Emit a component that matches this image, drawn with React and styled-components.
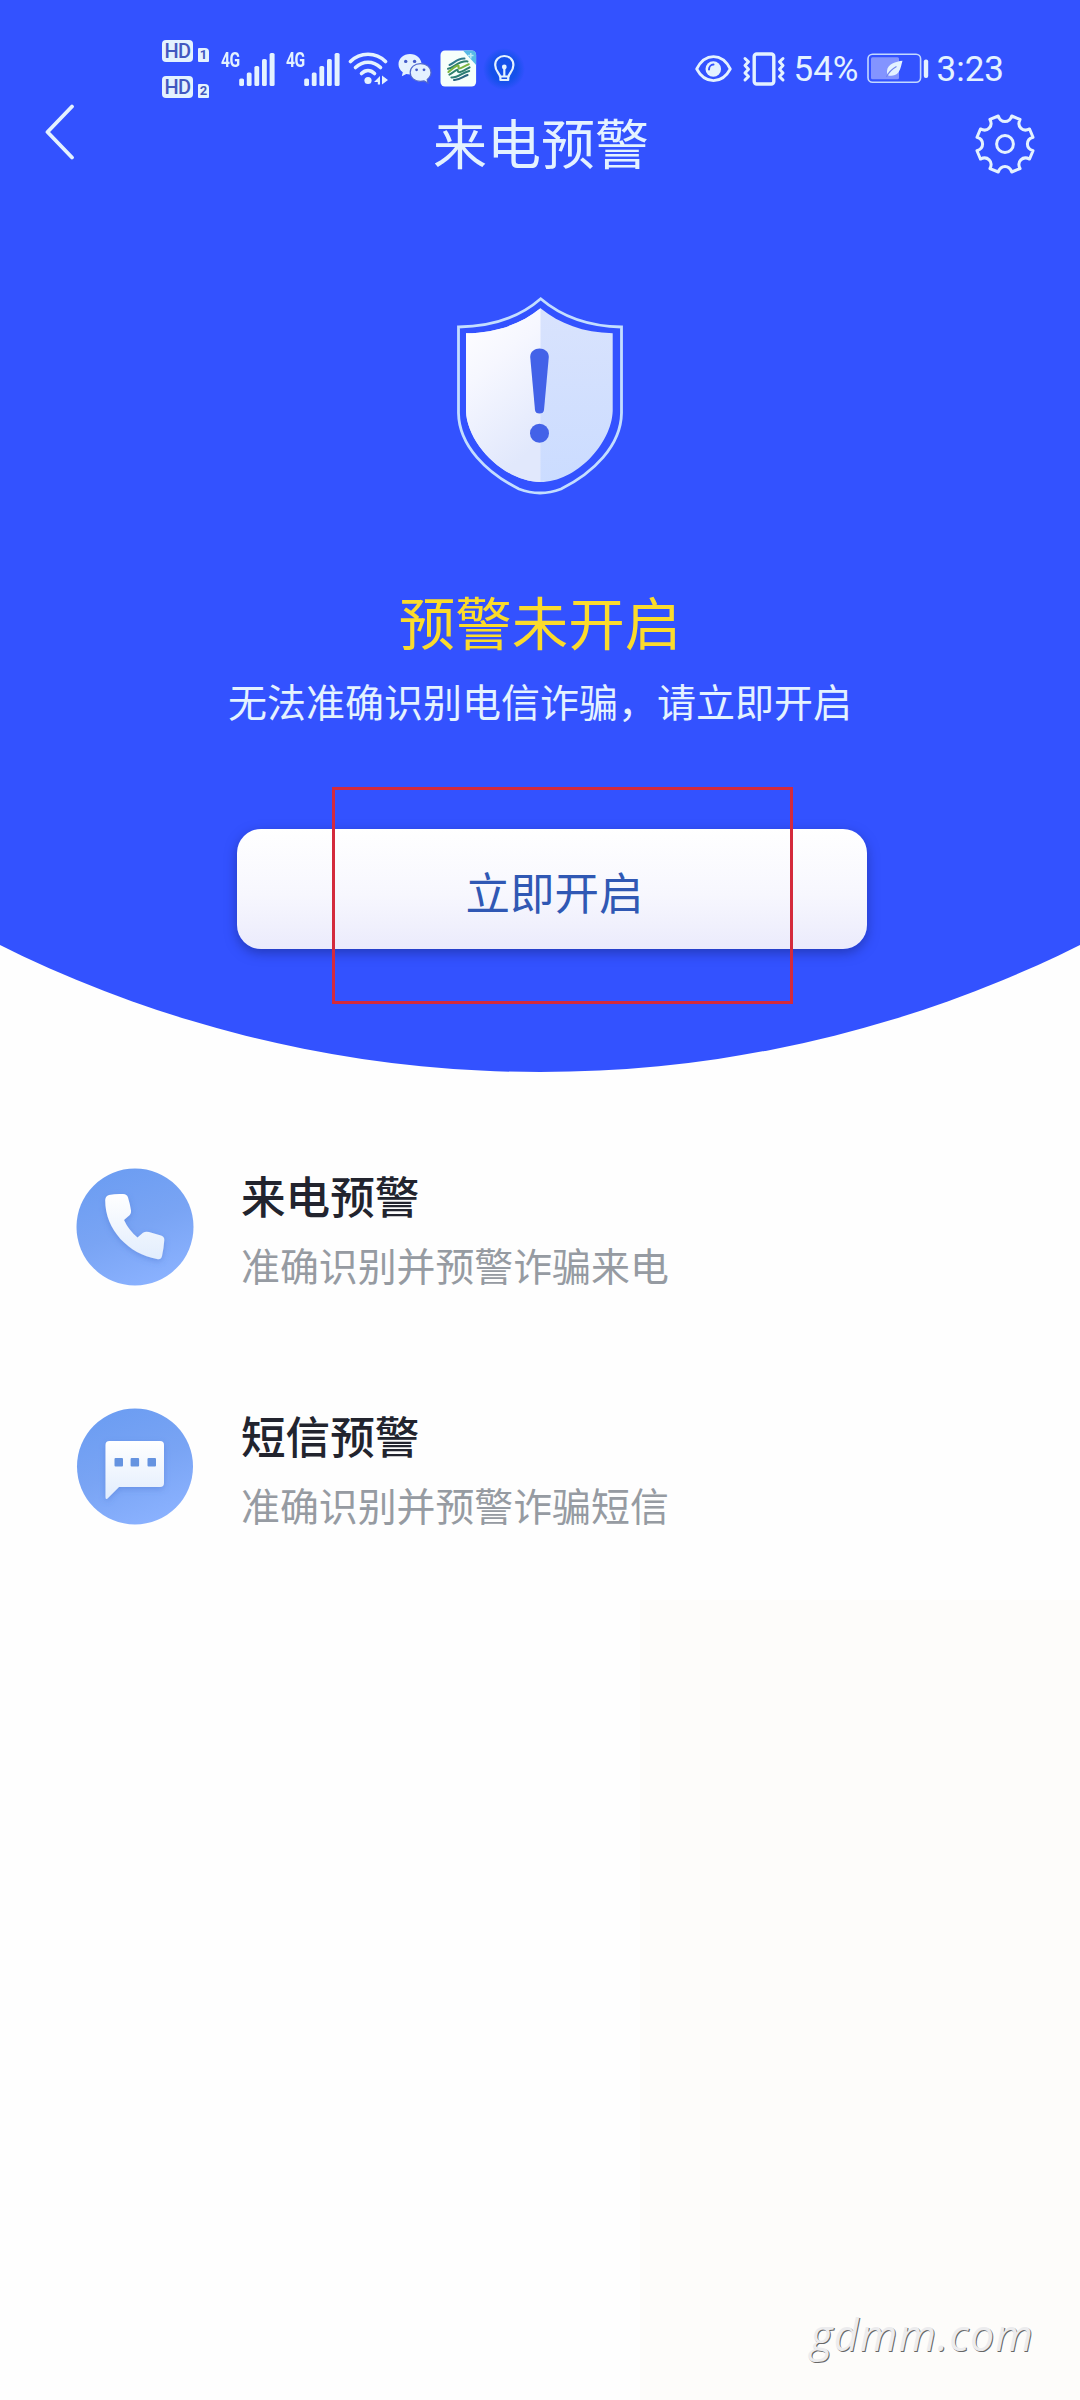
import styled, { createGlobalStyle } from 'styled-components';

const COLORS = {
  blue: '#3352ff',
  yellow: '#fbdb2c',
  ice: '#e4f2ff',
  ink: '#22242e',
  gray: '#969ba2',
  red: '#d42a3c',
};

const FEATURES = [
  { id: 'call', title: '来电预警', text: '准确识别并预警诈骗来电' },
  { id: 'sms', title: '短信预警', text: '准确识别并预警诈骗短信' },
];

const App = () => (
  <>
    <GlobalStyle />
    <Page>
      <Hero>
        <StatusBar />
        <NavBar>
          <BackButton aria-label="返回">
            <svg width="30" height="56" viewBox="0 0 30 56" fill="none">
              <path d="M27 2.5 L2.5 28 L27 53.5" stroke={COLORS.ice} strokeWidth="3.8" strokeLinecap="round" strokeLinejoin="round" />
            </svg>
          </BackButton>
          <Title>来电预警</Title>
          <SettingsButton aria-label="设置">
            <GearIcon />
          </SettingsButton>
        </NavBar>
        <ShieldIcon />
        <State>预警未开启</State>
        <Hint>无法准确识别电信诈骗，请立即开启</Hint>
        <ActionArea>
          <ActionButton>立即开启</ActionButton>
          <Highlight />
        </ActionArea>
      </Hero>
      <List>
        {FEATURES.map((item) => (
          <Item key={item.id}>
            {item.id === 'call' ? <CallIcon /> : <SmsIcon />}
            <ItemBody>
              <ItemTitle>{item.title}</ItemTitle>
              <ItemText>{item.text}</ItemText>
            </ItemBody>
          </Item>
        ))}
      </List>
      <Watermark>gdmm.com</Watermark>
    </Page>
  </>
);

const StatusBar = () => (
  <Bar>
    <Group>
      <HdColumn>
        {[1, 2].map((sim) => (
          <HdRow key={sim}>
            <HdBadge>HD</HdBadge>
            <SimBadge>{sim}</SimBadge>
          </HdRow>
        ))}
      </HdColumn>
      <Signal />
      <Signal />
      <WifiIcon />
      <WechatIcon />
      <MobileIcon />
      <BulbIcon />
    </Group>
    <Group>
      <EyeIcon />
      <VibrateIcon />
      <StatusText>54%</StatusText>
      <BatteryIcon />
      <StatusText>3:23</StatusText>
    </Group>
  </Bar>
);

const Signal = () => (
  <SignalBox>
    <Network>4G</Network>
    <svg width="37" height="34" viewBox="0 0 37 34" fill={COLORS.ice}>
      <rect x="0.2" y="26.5" width="4.8" height="7.5" rx="1.6" />
      <rect x="7.8" y="20.5" width="4.8" height="13.5" rx="1.6" />
      <rect x="15.4" y="14" width="4.8" height="20" rx="1.6" />
      <rect x="23" y="7" width="4.8" height="27" rx="1.6" />
      <rect x="30.6" y="1" width="5" height="33" rx="1.6" />
    </svg>
  </SignalBox>
);

const WifiIcon = () => (
  <StatusIcon width="42" height="36" viewBox="0 0 42 36" $left={-3}>
    <g fill="none" stroke={COLORS.ice} strokeWidth="3.6" strokeLinecap="round">
      <path d="M2.5 10.5 C12 0.8 28 0.8 37.5 10.5" />
      <path d="M7.5 16.5 C15 9.4 25 9.4 32.5 16.5" />
      <path d="M13.5 22.5 C17.5 18.6 22.5 18.6 26.5 22.5" />
    </g>
    <circle cx="20" cy="29.5" r="3.6" fill={COLORS.ice} />
    <path d="M32 25 L32 33.5 L29.8 33.5 L29.8 31 L26 31 Z M34 24.5 L40 29 L34 33.5 Z" fill={COLORS.ice} />
  </StatusIcon>
);

const WechatIcon = () => (
  <StatusIcon width="34" height="32" viewBox="0 0 34 32" $left={8}>
    <path d="M12 1 C5.4 1 0.5 5.4 0.5 11.2 C0.5 14.6 2.2 17.4 4.8 19.3 L3.8 23.2 L8.3 21 C9.5 21.3 10.7 21.5 12 21.5 C18.6 21.5 23.5 17 23.5 11.2 C23.5 5.4 18.6 1 12 1 Z" fill={COLORS.ice} />
    <path d="M22.5 10.6 C16.6 10.6 12.2 14.4 12.2 19.5 C12.2 24.6 16.6 28.4 22.5 28.4 C23.8 28.4 25 28.2 26.1 27.9 L30 30 L29.2 26.4 C31.6 24.7 33 22.3 33 19.5 C33 14.4 28.4 10.6 22.5 10.6 Z" fill={COLORS.ice} stroke="#4f66cf" strokeWidth="1.2" />
    <g fill="#435bc8">
      <circle cx="7.7" cy="8.4" r="1.7" />
      <circle cx="16.6" cy="8.4" r="1.7" />
      <circle cx="18.6" cy="16.8" r="1.4" />
      <circle cx="26" cy="16.8" r="1.4" />
    </g>
  </StatusIcon>
);

const MobileIcon = () => (
  <StatusIcon width="37" height="37" viewBox="0 0 37 37" $left={8}>
    <rect x="0.5" y="0.5" width="35.6" height="36" rx="4.5" fill="#f6fffb" />
    <path d="M23 0.5 H31.6 Q36.1 0.5 36.1 5 V15 Z" fill="#58b9e6" />
    <path d="M28 5.5 H33.5 M30.8 3 V8.5" stroke="#b9ebf5" strokeWidth="1.5" />
    <g fill="none" strokeWidth="2" strokeLinecap="round">
      <path d="M9.5 15 C14 13.5 17 8.2 24.5 8.6" stroke="#2e7a8c" />
      <path d="M8 18.8 C14 18 18 10.8 27.5 11.4" stroke="#2d7f6e" />
      <path d="M8.4 22 C12 19 20 12 18.5 17.5 C18 20.5 24 16 28.8 14.2" stroke="#7bb440" />
      <path d="M9.4 24.6 C14 22.5 18 17.5 17.8 21 C18 24 24 20.5 29.6 17.4" stroke="#2d7f6e" />
      <path d="M11.4 27.4 C18 28 22 22.5 29.2 21" stroke="#2b7d74" />
      <path d="M14 30 C19.5 30.4 23 26.5 27.6 25" stroke="#29657f" />
    </g>
  </StatusIcon>
);

const BulbIcon = () => (
  <StatusIcon width="42" height="42" viewBox="0 0 42 42" $left={6}>
    <defs>
      <radialGradient id="bulbGlow">
        <stop offset="0.6" stopColor="#1450ea" />
        <stop offset="1" stopColor={COLORS.blue} />
      </radialGradient>
    </defs>
    <circle cx="21" cy="21" r="21" fill="url(#bulbGlow)" />
    <g fill="none" stroke={COLORS.ice} strokeWidth="2.2" strokeLinejoin="round">
      <path d="M17 28.5 C17 25.5 12.2 23.5 12.2 17 C12.2 11.5 16.2 8 21.3 8 C26.4 8 30.4 11.5 30.4 17 C30.4 23.5 25.6 25.5 25.6 28.5 Z" />
      <path d="M17.4 28 V32 H25.2 V28 M21.3 20 V28" />
    </g>
    <circle cx="21.3" cy="19" r="2.4" fill={COLORS.ice} />
  </StatusIcon>
);

const EyeIcon = () => (
  <StatusIcon width="37" height="30" viewBox="0 0 37 30" $left={0}>
    <path d="M1.7 15 C10 -1.5 27 -1.5 35.3 15 C27 30.5 10 30.5 1.7 15 Z" fill="none" stroke={COLORS.ice} strokeWidth="2.8" strokeLinejoin="round" />
    <circle cx="18.3" cy="15" r="7.8" fill={COLORS.ice} />
    <path d="M14 15.5 A4.8 4.8 0 0 1 18.5 10.6" fill="none" stroke={COLORS.blue} strokeWidth="2" strokeLinecap="round" />
  </StatusIcon>
);

const VibrateIcon = () => (
  <StatusIcon width="44" height="34" viewBox="0 0 44 34" $left={10}>
    <g fill="none" stroke={COLORS.ice} strokeLinejoin="round" strokeLinecap="round">
      <rect x="12.2" y="2" width="19.6" height="30" rx="2.5" strokeWidth="3.4" />
      <path d="M3 6.5 L6.5 9.8 L3 13.5 L6.5 17.2 L3 21 L6.5 24.5 L3 28" strokeWidth="3" />
      <path d="M41 6.5 L37.5 9.8 L41 13.5 L37.5 17.2 L41 21 L37.5 24.5 L41 28" strokeWidth="3" />
    </g>
  </StatusIcon>
);

const BatteryIcon = () => (
  <StatusIcon width="62" height="31" viewBox="0 0 62 31" $left={8}>
    <rect x="1" y="1.2" width="52.6" height="28" rx="4.5" fill="none" stroke="#c3d9ff" strokeWidth="1.6" />
    <rect x="4" y="4.2" width="28" height="22" rx="1.5" fill="#8394ff" />
    <path d="M35.5 7.8 C29 8.5 20.5 11 20 18 C19.9 20 20.2 21.3 20.8 22.2 C23.5 23.2 28.5 23.2 31.5 19.2 C34 16 34.4 11 35.5 7.8 Z" fill={COLORS.ice} />
    <path d="M19.4 24 C22 18.5 25 16 29.5 13.5" fill="none" stroke="#7284ee" strokeWidth="1.2" />
    <rect x="56.8" y="6.5" width="4.4" height="18.5" rx="2" fill={COLORS.ice} />
  </StatusIcon>
);

// one tooth plus one notch, repeated eight times around the centre
const gearPath = () => {
  const at = (deg, r) => {
    const a = ((deg - 90) * Math.PI) / 180;
    return `${(Math.cos(a) * r).toFixed(2)} ${(Math.sin(a) * r).toFixed(2)}`;
  };
  let d = `M${at(-13.5, 28.8)}`;
  for (let i = 0; i < 8; i += 1) {
    const m = i * 45;
    d += ` C${at(m - 12, 21)} ${at(m + 12, 21)} ${at(m + 13.5, 28.8)} L${at(m + 31.5, 28.8)}`;
  }
  return `${d} Z`;
};

const GearIcon = () => (
  <svg width="64" height="64" viewBox="-32 -32 64 64" fill="none" stroke={COLORS.ice} strokeWidth="3" strokeLinejoin="round">
    <path d={gearPath()} />
    <circle r="8.4" />
  </svg>
);

const ShieldIcon = () => (
  <Shield width="170" height="200" viewBox="0 0 170 200">
    <defs>
      <linearGradient id="shieldLeft" x1="0" y1="0" x2="0.35" y2="1">
        <stop offset="0" stopColor="#ffffff" />
        <stop offset="0.4" stopColor="#f6f7ff" />
        <stop offset="1" stopColor="#e1e8fc" />
      </linearGradient>
      <linearGradient id="shieldRight" x1="0" y1="0" x2="0" y2="1">
        <stop offset="0" stopColor="#d9e3fd" />
        <stop offset="1" stopColor="#cbdcff" />
      </linearGradient>
    </defs>
    <path
      d="M85.7 3.8 C107 22 134 31.5 166.5 32 V118 C166 151 138 178 106 194 Q85 202 64 194 C32 178 4 151 3.5 118 V32 C37 31.5 65 22 85.7 3.8 Z"
      fill="none"
      stroke="#c4deff"
      strokeWidth="2.8"
    />
    <path d="M85.5 13.3 C66 29 43 37.5 11 38.3 V116 C12 149 50 187 85.5 187 C121 187 156.5 149 157.7 116 V38.3 C128 37.5 105 29 85.5 13.3 Z" fill="url(#shieldRight)" />
    <path d="M85.5 13.3 C66 29 43 37.5 11 38.3 V116 C12 149 50 187 85.5 187 Z" fill="url(#shieldLeft)" />
    <path d="M75.2 62 C75.2 50.5 93.8 50.5 93.8 62 L89 115 Q88.6 118.6 84.5 118.6 Q80.4 118.6 80 115 Z" fill="#4362e8" />
    <circle cx="84.5" cy="138.2" r="9.5" fill="#4362e8" />
  </Shield>
);

const IconDefs = ({ id }) => (
  <defs>
    <linearGradient id={`${id}Disc`} x1="0.3" y1="0" x2="0.7" y2="1">
      <stop offset="0" stopColor="#6c9df2" />
      <stop offset="0.5" stopColor="#79a4f4" />
      <stop offset="1" stopColor="#8bb2ff" />
    </linearGradient>
    <linearGradient id={`${id}Glyph`} x1="0" y1="0" x2="0" y2="1">
      <stop offset="0" stopColor="#ffffff" />
      <stop offset="1" stopColor="#e2edfd" />
    </linearGradient>
    <filter id={`${id}Shadow`} x="-20%" y="-20%" width="140%" height="140%">
      <feDropShadow dx="0" dy="2" stdDeviation="3" floodColor="#4a74cf" floodOpacity="0.45" />
    </filter>
  </defs>
);

const CallIcon = () => (
  <Disc width="118" height="118" viewBox="0 0 118 118">
    <IconDefs id="call" />
    <circle cx="59" cy="59" r="58.5" fill="url(#callDisc)" />
    <path
      d="M33 27 Q40 25.5 47 26 Q51 26.2 52 29.5 Q54 36 55 42.5 Q55.5 46 52 48.5 L48 52 Q52.5 62 61.5 69.5 L67 64.8 Q69.5 63 73 64 L85 67.5 Q88.5 68.5 88.3 72 Q87.8 80 86 88 Q85 92 81 91 C53 86 29 62 29.2 32 Q29.5 28 33 27 Z"
      fill="url(#callGlyph)"
      filter="url(#callShadow)"
    />
  </Disc>
);

const SmsIcon = () => (
  <Disc width="118" height="118" viewBox="0 0 118 118">
    <IconDefs id="sms" />
    <circle cx="59" cy="58.5" r="58" fill="url(#smsDisc)" />
    <path
      d="M33.5 33 H84 Q88 33 88 37 V75 Q88 79 84 79 H43 L31.5 90.5 Q29.5 92 29.5 89 V37 Q29.5 33 33.5 33 Z"
      fill="url(#smsGlyph)"
      filter="url(#smsShadow)"
    />
    <g fill="#6593e0">
      <rect x="38.5" y="50" width="8.5" height="8.5" rx="1" />
      <rect x="54.6" y="50" width="8.5" height="8.5" rx="1" />
      <rect x="71.5" y="50" width="8.5" height="8.5" rx="1" />
    </g>
  </Disc>
);

const GlobalStyle = createGlobalStyle`
  * {
    box-sizing: border-box;
  }
  body {
    margin: 0;
    font-family: 'Noto Sans CJK SC', 'Noto Sans', sans-serif;
  }
  h1, h2, h3, p, ul {
    margin: 0;
    padding: 0;
    font-weight: 400;
  }
  svg {
    display: block;
    flex-shrink: 0;
  }
  button {
    padding: 0;
    border: 0;
    background: none;
    font: inherit;
  }
`;

const Page = styled.main`
  display: flex;
  flex-direction: column;
  width: 1080px;
  height: 2400px;
  overflow: hidden;
  background: linear-gradient(#fdfcfa, #fdfcfa) 640px 1600px / 440px 800px no-repeat #fefefe;
`;

const Hero = styled.section`
  display: flex;
  flex-direction: column;
  align-items: center;
  height: 1072px;
  flex-shrink: 0;
  background: ${COLORS.blue};
  clip-path: circle(1212px at 50% -140px);
`;

const Bar = styled.div`
  display: flex;
  justify-content: space-between;
  align-self: stretch;
  height: 100px;
  padding: 36px 76px 0 162px;
`;

const Group = styled.div`
  display: flex;
  align-items: center;
  height: 65px;
  color: ${COLORS.ice};
`;

const StatusIcon = styled.svg`
  margin-left: ${(p) => p.$left}px;
`;

const HdColumn = styled.div`
  display: flex;
  flex-direction: column;
  gap: 14px;
  width: 59px;
`;

const HdRow = styled.div`
  display: flex;
  align-items: flex-end;
  gap: 5px;
`;

const HdBadge = styled.span`
  width: 31px;
  height: 22px;
  border-radius: 4px;
  background: ${COLORS.ice};
  color: #4258c0;
  font: 500 20px/22px Roboto, sans-serif;
  letter-spacing: -0.5px;
  text-align: center;
`;

const SimBadge = styled.span`
  width: 11px;
  height: 14px;
  border-radius: 1px 4px 1px 1px;
  background: ${COLORS.ice};
  color: #4258c0;
  font: 700 13px/14px Roboto, sans-serif;
  text-align: center;
`;

const SignalBox = styled.div`
  display: flex;
  align-items: flex-start;
  width: 65px;
`;

const Network = styled.span`
  width: 18px;
  margin-top: -7px;
  font: 700 20px/30px Roboto, sans-serif;
  letter-spacing: -0.5px;
  transform: scaleX(0.78);
  transform-origin: left;
`;

const StatusText = styled.span`
  margin: 3px 0 0 8px;
  font: 400 35px/40px Roboto, sans-serif;
`;

const NavBar = styled.header`
  display: grid;
  grid-template-columns: 1fr auto 1fr;
  align-items: center;
  align-self: stretch;
  height: 88px;
  padding: 0 43px 0 45px;
`;

const BackButton = styled.button`
  justify-self: start;
  margin-bottom: 25px;
`;

const SettingsButton = styled.button`
  justify-self: end;
`;

const Title = styled.h1`
  margin-bottom: 5px;
  color: ${COLORS.ice};
  font-size: 54px;
  line-height: 80px;
`;

const Shield = styled.svg`
  margin-top: 107px;
`;

const State = styled.h2`
  margin-top: 85px;
  color: ${COLORS.yellow};
  font-size: 56.5px;
  line-height: 80px;
`;

const Hint = styled.p`
  margin-top: 10px;
  color: ${COLORS.ice};
  font-size: 39px;
  line-height: 60px;
`;

const ActionArea = styled.div`
  position: relative;
  margin-top: 99px;
  padding-left: 23px;
`;

const ActionButton = styled.button`
  width: 630px;
  height: 120px;
  padding-left: 6px;
  border-radius: 24px;
  background: linear-gradient(#ffffff, #f7f7fe 55%, #ebebfc);
  box-shadow: 0 4px 12px rgba(24, 38, 130, 0.55);
  color: #3058b4;
  font-size: 44.5px;
  line-height: 124px;
`;

/* marks the part of the button to tap */
const Highlight = styled.div`
  position: absolute;
  top: -42px;
  left: 118px;
  width: 461px;
  height: 217px;
  border: 3px solid ${COLORS.red};
`;

const List = styled.ul`
  display: flex;
  flex-direction: column;
  gap: 122px;
  padding: 96px 76px 0;
  list-style: none;
`;

const Item = styled.li`
  display: flex;
  height: 118px;
`;

const Disc = styled.svg`
  margin-right: 47px;
`;

const ItemBody = styled.div`
  margin-top: -3px;
`;

const ItemTitle = styled.h3`
  color: ${COLORS.ink};
  font-size: 44.6px;
  font-weight: 500;
  line-height: 60px;
`;

const ItemText = styled.p`
  margin-top: 9px;
  color: ${COLORS.gray};
  font-size: 38.9px;
  line-height: 60px;
`;

const Watermark = styled.footer`
  margin: auto 46px 37px auto;
  color: #ececee;
  font: italic 400 43px/56px 'Open Sans', sans-serif;
  letter-spacing: 1.2px;
  text-shadow: 1px 1px 0 #666;
`;

export default App;
